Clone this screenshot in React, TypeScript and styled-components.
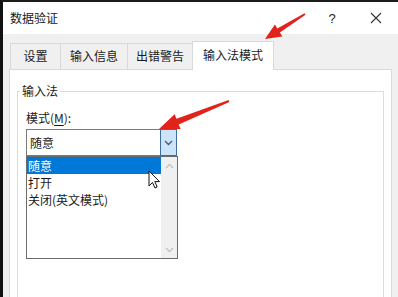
import styled, { createGlobalStyle } from 'styled-components';

const GlobalStyle = createGlobalStyle`
  * {
    box-sizing: border-box;
  }
  body {
    margin: 0;
    font-family: 'Noto Sans CJK SC', 'Microsoft YaHei', sans-serif;
    font-size: 12px;
    color: #1a1a1a;
    background: #fff;
  }
`;

const Window = styled.div`
  position: relative;
  width: 398px;
  height: 297px;
  overflow: hidden;
  display: flex;
  flex-direction: column;
  background: #f0f0f0;
  border-top: 2px solid #1c1c1c;
  border-left: 3px solid #111;
`;

const TitleBar = styled.div`
  height: 32px;
  flex: none;
  display: flex;
  align-items: center;
  background: #fff;
  padding-left: 7px;
`;

const Title = styled.div`
  flex: 1;
  font-size: 12px;
  line-height: 16px;
`;

const TitleButton = styled.div`
  width: 44px;
  height: 32px;
  display: flex;
  align-items: center;
  justify-content: center;
  font-family: 'Liberation Sans', sans-serif;
  font-size: 13px;
  color: #222;
`;

const Body = styled.div`
  flex: 1;
  padding: 7px 6px 0 6px;
  display: flex;
  flex-direction: column;
`;

const TabStrip = styled.div`
  display: flex;
  align-items: flex-end;
  padding-left: 1px;
  height: 28px;
`;

const Tab = styled.div<{ $active?: boolean; $w: number }>`
  width: ${({ $w }) => $w}px;
  height: ${({ $active }) => ($active ? 29 : 26)}px;
  margin-right: -1px;
  margin-bottom: ${({ $active }) => ($active ? -1 : 0)}px;
  display: flex;
  align-items: center;
  justify-content: center;
  padding-bottom: ${({ $active }) => ($active ? 3 : 1)}px;
  background: ${({ $active }) => ($active ? '#fff' : '#f0f0f0')};
  border: 1px solid #d9d9d9;
  border-bottom: none;
  position: relative;
  z-index: ${({ $active }) => ($active ? 2 : 1)};
  line-height: 16px;
`;

const Panel = styled.div`
  flex: none;
  height: 240px;
  background: #fff;
  border: 1px solid #d9d9d9;
  padding: 13px 7px 0 7px;
`;

const GroupBox = styled.fieldset`
  margin: 0;
  height: 230px;
  border: 1px solid #dcdcdc;
  padding: 0 2px;
`;

const GroupLegend = styled.legend`
  padding: 0 2px;
  line-height: 16px;
  font-size: 12px;
`;

const GroupContent = styled.div`
  padding: 11px 0 0 6px;
`;

const FieldLabel = styled.div`
  line-height: 16px;
  margin-bottom: 3px;

  u {
    text-underline-offset: 2px;
  }
`;

const ComboWrap = styled.div`
  position: relative;
  width: 151px;
`;

const Combo = styled.div`
  height: 27px;
  display: flex;
  align-items: stretch;
  border: 1px solid #7a7a7a;
  background: #fff;
`;

const ComboText = styled.div`
  flex: 1;
  display: flex;
  align-items: center;
  padding-left: 3px;
  line-height: 16px;
`;

const ComboButton = styled.div`
  width: 17px;
  display: flex;
  align-items: center;
  justify-content: center;
  background: #cce4f7;
  border: 1px solid #3d6f9a;
  margin: -1px -1px -1px 0;
`;

const DropList = styled.div`
  position: absolute;
  left: 0;
  top: 27px;
  width: 152px;
  height: 103px;
  display: flex;
  border: 1px solid #6b6b6b;
  background: #fff;
  z-index: 3;
`;

const Items = styled.div`
  flex: 1;
`;

const Item = styled.div<{ $selected?: boolean }>`
  height: 17px;
  display: flex;
  align-items: center;
  padding-left: 1px;
  line-height: 16px;
  background: ${({ $selected }) => ($selected ? '#0078d7' : 'transparent')};
  color: ${({ $selected }) => ($selected ? '#fff' : '#1a1a1a')};
`;

const ScrollBar = styled.div`
  width: 16px;
  background: #f0f0f0;
  display: flex;
  flex-direction: column;
  justify-content: space-between;
  align-items: center;
  padding: 6px 0 5px;
`;

const Overlay = styled.svg`
  position: absolute;
  left: -3px;
  top: -2px;
  width: 398px;
  height: 297px;
  pointer-events: none;
  z-index: 10;
`;

const Chevron = ({ up, color }: { up?: boolean; color: string }) => (
  <svg width="9" height="6" viewBox="0 0 9 6">
    <path
      d={up ? 'M1 5 L4.5 1.5 L8 5' : 'M1 1 L4.5 4.5 L8 1'}
      fill="none"
      stroke={color}
      strokeWidth="1.3"
    />
  </svg>
);

const CloseIcon = () => (
  <svg width="12" height="12" viewBox="0 0 12 12">
    <path d="M1 1 L11 11 M11 1 L1 11" stroke="#333" strokeWidth="1.1" />
  </svg>
);

const tabs = [
  { label: '设置', w: 51 },
  { label: '输入信息', w: 68 },
  { label: '出错警告', w: 66 },
  { label: '输入法模式', w: 82, active: true },
];

const items = ['随意', '打开', '关闭(英文模式)'];

const App = () => {
  return (
    <>
      <GlobalStyle />
      <Window>
        <TitleBar>
          <Title>数据验证</Title>
          <TitleButton>?</TitleButton>
          <TitleButton>
            <CloseIcon />
          </TitleButton>
        </TitleBar>
        <Body>
          <TabStrip>
            {tabs.map((t) => (
              <Tab key={t.label} $w={t.w} $active={t.active}>
                {t.label}
              </Tab>
            ))}
          </TabStrip>
          <Panel>
            <GroupBox>
              <GroupLegend>输入法</GroupLegend>
              <GroupContent>
                <FieldLabel>
                  模式(<u>M</u>):
                </FieldLabel>
                <ComboWrap>
                  <Combo>
                    <ComboText>随意</ComboText>
                    <ComboButton>
                      <Chevron color="#4a5a6a" />
                    </ComboButton>
                  </Combo>
                  <DropList>
                    <Items>
                      {items.map((it, i) => (
                        <Item key={it} $selected={i === 0}>
                          {it}
                        </Item>
                      ))}
                    </Items>
                    <ScrollBar>
                      <Chevron up color="#c2c2c2" />
                      <Chevron color="#c2c2c2" />
                    </ScrollBar>
                  </DropList>
                </ComboWrap>
              </GroupContent>
            </GroupBox>
          </Panel>
        </Body>
        <Overlay viewBox="0 0 398 297">
          <polygon
            points="304.5,13.2 277.3,28.4 274.9,24.6 265,39 282.3,36.4 279.9,32.6 305.5,14.8"
            fill="#e1231c"
          />
          <polygon
            points="228.6,99.9 176.5,118.8 174.6,114.2 159,129 180.6,129 178.7,124.4 229.4,102.1"
            fill="#e1231c"
          />
          <path
            d="M149 171 L149 186 L152.5 182.5 L155 188 L157.2 187 L154.8 181.6 L159.5 181.6 Z"
            fill="#fff"
            stroke="#111"
            strokeWidth="1"
            strokeLinejoin="round"
          />
        </Overlay>
      </Window>
    </>
  );
};

export default App;
